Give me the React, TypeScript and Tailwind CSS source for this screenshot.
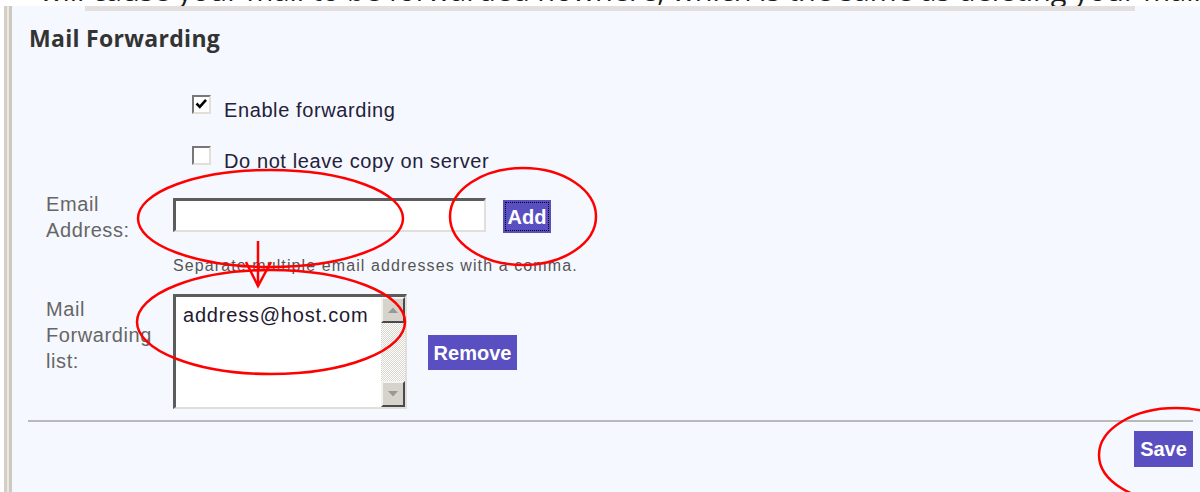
import React from "react";

function CheckBox({ checked }: { checked: boolean }) {
  return (
    <span className="flex h-[19px] w-[19px] shrink-0 border-2 border-t-[#777777] border-l-[#777777] border-b-[#e2dfd8] border-r-[#e2dfd8] bg-white">
      {checked && (
        <svg viewBox="0 0 15 15" className="h-full w-full">
          <path d="M2.5 6.5 L5.8 9.8 L12 2.8" stroke="#000" strokeWidth="2.6" fill="none" />
        </svg>
      )}
    </span>
  );
}

function PurpleButton({ label, focused }: { label: string; focused?: boolean }) {
  return (
    <button className="flex h-full w-full items-center justify-center bg-[#5a4fc0] p-[2px] text-[20px] font-bold leading-none text-white">
      <span
        className={
          focused
            ? "flex h-full w-full items-center justify-center border border-dotted border-black"
            : "flex h-full w-full items-center justify-center"
        }
      >
        {label}
      </span>
    </button>
  );
}

function ScrollArrow({ up }: { up: boolean }) {
  return (
    <div className="flex h-[26px] w-full items-center justify-center border-t-2 border-l-2 border-t-[#f4f2ee] border-l-[#f4f2ee] border-b-2 border-r-2 border-b-[#4a4a4a] border-r-[#4a4a4a] bg-[#d6d3cc]">
      <svg width="12" height="8" viewBox="0 0 12 8">
        {up ? <path d="M1 7 L6 1.5 L11 7 Z" fill="#9a9893" /> : <path d="M1 1 L6 6.5 L11 1 Z" fill="#9a9893" />}
      </svg>
    </div>
  );
}

export default function App() {
  return (
    <div className="relative h-[492px] w-[1200px] overflow-hidden bg-white font-['Liberation_Sans',Arial,sans-serif]">
      {/* tail of the paragraph above the panel */}
      <div className="h-[6px] overflow-hidden">
        <p className="mt-[-25px] whitespace-nowrap pl-[40px] font-['Open_Sans',sans-serif] text-[29px] leading-[29px] text-[#1c1c1c]">
          will cause your mail to be forwarded nowhere, which is the same as deleting your mail.
        </p>
      </div>

      <div className="flex h-[486px]">
        <div className="w-[4px]" />
        <div className="w-[3px] bg-[#d3cfc7]" />
        <div className="w-[2px] bg-[#ece9e3]" />
        <div className="w-[3px] bg-[#cdc9c1]" />

        <section className="flex flex-1 flex-col bg-[#f5f8fe]">
          <div className="ml-[73px] mr-[65px] h-[5px] bg-[#e3dfdf]" />

          <h2 className="mt-[12px] pl-[17px] font-['Open_Sans',sans-serif] text-[23px] font-bold leading-[30px] tracking-[0.3px] text-[#333333]">
            Mail Forwarding
          </h2>

          <label className="ml-[180px] mt-[42px] flex items-start gap-[13px] text-[20px] leading-[24px] tracking-[0.6px] text-[#24213a]">
            <CheckBox checked />
            <span className="mt-[3px]">Enable forwarding</span>
          </label>

          <label className="ml-[180px] mt-[24px] flex items-start gap-[13px] text-[20px] leading-[24px] tracking-[0.6px] text-[#24213a]">
            <CheckBox checked={false} />
            <span className="mt-[3px]">Do not leave copy on server</span>
          </label>

          <div className="mt-[18px] grid grid-cols-[127px_1fr] pl-[34px]">
            <div className="text-[20px] leading-[26px] tracking-[0.6px] text-[#666666]">
              Email
              <br />
              Address:
            </div>
            <div className="flex items-start gap-[17px]">
              <div className="mt-[7px] h-[34px] w-[313px] border-t-[3px] border-l-[3px] border-t-[#5c5c5c] border-l-[#5c5c5c] border-b-2 border-r-2 border-b-[#e2dfd8] border-r-[#e2dfd8] bg-white" />
              <div className="mt-[9px] h-[33px] w-[48px]">
                <PurpleButton label="Add" focused />
              </div>
            </div>

            <div />
            <p className="mt-[13px] text-[16px] leading-[20px] tracking-[1.1px] text-[#555555]">
              Separate multiple email addresses with a comma.
            </p>

            <div className="mt-[20px] text-[20px] leading-[26px] tracking-[0.6px] text-[#666666]">
              Mail
              <br />
              Forwarding
              <br />
              list:
            </div>
            <div className="mt-[18px] flex items-start gap-[21px]">
              <div className="flex h-[115px] w-[234px] border-t-[3px] border-l-[3px] border-t-[#5c5c5c] border-l-[#5c5c5c] border-b-2 border-r-2 border-b-[#e2dfd8] border-r-[#e2dfd8] bg-white">
                <div className="flex-1 pl-[7px] pt-[6px] text-[20px] leading-[24px] tracking-[0.8px] text-[#1e1b30]">
                  address@host.com
                </div>
                <div className="flex w-[24px] flex-col">
                  <ScrollArrow up />
                  <div className="flex-1 bg-[repeating-conic-gradient(#d9d6cf_0_25%,#ffffff_0_50%)] bg-[length:2px_2px]" />
                  <ScrollArrow up={false} />
                </div>
              </div>
              <div className="mt-[41px] h-[35px] w-[89px]">
                <PurpleButton label="Remove" />
              </div>
            </div>
          </div>

          <div className="ml-[16px] mr-[7px] mt-[11px] h-[2px] bg-[#b9b9b9]" />

          <div className="mr-[7px] mt-[9px] flex justify-end">
            <div className="h-[36px] w-[59px]">
              <PurpleButton label="Save" />
            </div>
          </div>
        </section>
      </div>

      {/* red pen markings drawn over the form */}
      <svg className="pointer-events-none absolute left-0 top-0" width={1200} height={492} viewBox="0 0 1200 492">
        <g fill="none" stroke="#ff0000" strokeWidth="2.5">
          <ellipse cx="270.5" cy="218.5" rx="132.5" ry="48.5" />
          <ellipse cx="523" cy="216.5" rx="73" ry="48.5" />
          <ellipse cx="271" cy="322" rx="134" ry="52" />
          <ellipse cx="1176" cy="455" rx="77" ry="47" />
          <path d="M258 241 L258 286" />
          <path d="M246 262 L258 286 L271 262" />
        </g>
      </svg>
    </div>
  );
}
